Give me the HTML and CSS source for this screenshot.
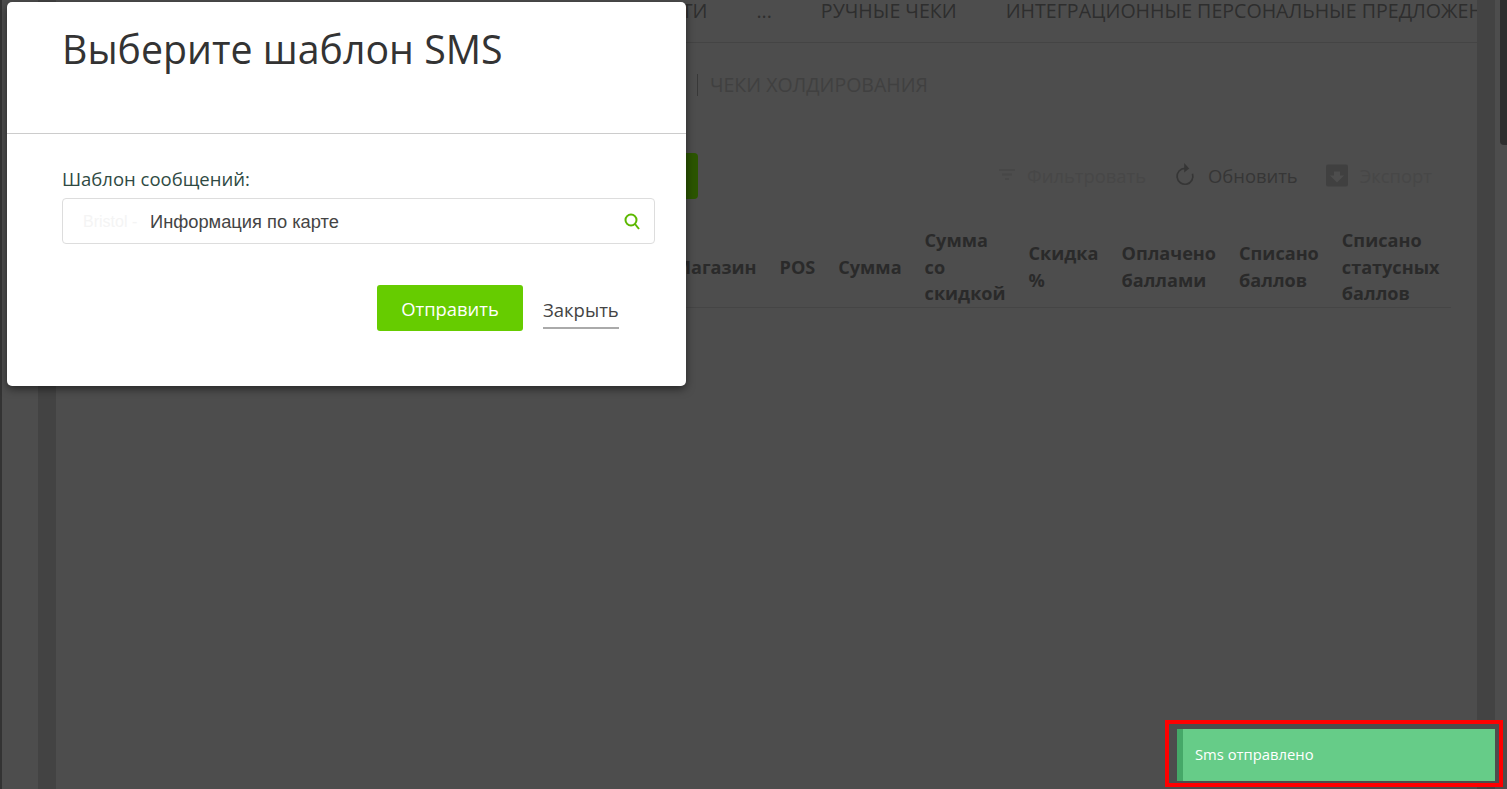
FILE: index.html
```html
<!DOCTYPE html>
<html lang="ru">
<head>
  <meta charset="UTF-8">
  <meta name="viewport" content="width=device-width, initial-scale=1.0">
  <title>Чеки</title>
  <link rel="stylesheet" href="styles.css">
</head>
<body>

  <div class="page">
    <div class="edge"></div>

    <div class="content">
      <div class="tabs">
        <span class="tab">АКТИВНОСТИ</span>
        <span class="tab">...</span>
        <span class="tab">РУЧНЫЕ ЧЕКИ</span>
        <span class="tab">ИНТЕГРАЦИОННЫЕ ПЕРСОНАЛЬНЫЕ ПРЕДЛОЖЕНИЯ</span>
      </div>

      <div class="subtabs">
        <span class="subtab">ЧЕКИ ХОЛДИРОВАНИЯ</span>
      </div>

      <div class="toolbar">
        <div class="add-btn"></div>
        <div class="tool tool-faded">
          <svg class="tool-icon-small" viewBox="0 0 16 12"><path d="M0 1h16M3 5.500h10M6 10h4" /></svg>
          Фильтровать
        </div>
        <div class="tool">
          <svg class="tool-icon" viewBox="0 0 22 30"><path d="M11 6.500a9.500 9.500 0 1 0 9 6.500" /><path class="fill" d="M10 0l6 6.500-6 5z" /></svg>
          Обновить
        </div>
        <div class="tool tool-faded">
          <svg class="tool-icon" viewBox="0 0 22 22"><path class="fill" d="M2 0h18a2 2 0 0 1 2 2v18a2 2 0 0 1-2 2H2a2 2 0 0 1-2-2V2a2 2 0 0 1 2-2z" /><path class="cut" d="M8 7h6v4h4l-7 7-7-7h4z" /></svg>
          Экспорт
        </div>
      </div>

      <table class="checks">
        <thead>
          <tr>
            <th>Магазин</th>
            <th>POS</th>
            <th>Сумма</th>
            <th>Сумма<br>со<br>скидкой</th>
            <th>Скидка<br>%</th>
            <th>Оплачено<br>баллами</th>
            <th>Списано<br>баллов</th>
            <th>Списано<br>статусных<br>баллов</th>
          </tr>
        </thead>
      </table>
    </div>

    <div class="scrollbar"><div class="thumb"></div></div>
  </div>

  <div class="modal">
    <div class="modal-head">
      <h2>Выберите шаблон SMS</h2>
    </div>
    <div class="modal-body">
      <div class="field-label">Шаблон сообщений:</div>
      <div class="select">
        <span class="ghost">Bristol -</span>
        <span class="select-value">Информация по карте</span>
        <svg class="search-icon" viewBox="0 0 16 17"><circle cx="7" cy="7" r="5.500" /><path d="M11 11l4 5" /></svg>
      </div>
      <div class="modal-actions">
        <button class="send-btn">Отправить</button>
        <span class="close-link">Закрыть</span>
      </div>
    </div>
  </div>

  <div class="highlight">
    <div class="toast">Sms отправлено</div>
  </div>

</body>
</html>
```

FILE: styles.css
```css
* {
  box-sizing: border-box;
}

html, body {
  height: 100%;
}

body {
  margin: 0;
  overflow: hidden;
  background-color: #4d4d4d;
  font-family: "Open Sans", Arial, sans-serif;
  color: #2a2a2a;
}

.page {
  display: flex;
  height: 100vh;
}

.edge {
  width: 2px;
  background-color: #333;
}

.content {
  width: 1457px;
  margin-left: 36px;
  border-left: 18px solid #434343;
  border-right: 18px solid #434343;
  overflow: hidden;
}

.scrollbar {
  width: 7px;
  margin-left: 5px;
}

.thumb {
  height: 145px;
  background-color: #2e2e2e;
  border-radius: 0 0 0 4px;
}

.tabs {
  display: flex;
  gap: 49px;
  height: 43px;
  padding-left: 521px;
  border-bottom: 1px solid #444;
  font-size: 19.600px;
  line-height: 21px;
  white-space: nowrap;
  color: #2e2e2e;
  overflow: hidden;
}

.subtabs {
  height: 110px;
  padding: 31px 0 0 641px;
}

.subtab {
  display: inline-block;
  height: 22px;
  padding-left: 12px;
  border-left: 1px solid #383838;
  font-size: 19.500px;
  line-height: 22px;
  color: #404040;
}

.toolbar {
  display: flex;
  align-items: center;
  height: 46px;
  padding-right: 45px;
}

.add-btn {
  width: 140px;
  height: 46px;
  margin-left: 502px;
  margin-right: auto;
  background-color: #2b5500;
  border-radius: 4px;
}

.tool {
  display: flex;
  align-items: center;
  gap: 12px;
  margin-left: 28px;
  padding-bottom: 2px;
  font-size: 18.400px;
  color: #363636;
}

.tool-faded {
  color: #474747;
}

.tool svg {
  fill: none;
  stroke: currentColor;
  stroke-width: 2;
}

.tool svg .fill {
  fill: currentColor;
  stroke: none;
}

.tool svg .cut {
  fill: #4d4d4d;
  stroke: none;
}

.tool-faded svg .fill {
  fill: #404040;
}

.tool-icon-small {
  width: 16px;
  height: 12px;
}

.tool-icon {
  width: 22px;
  height: 25px;
}

.checks {
  margin: 28px 26px 0 auto;
  border-collapse: collapse;
}

.checks th {
  padding: 0 11.500px;
  border-bottom: 1px solid #454545;
  font-size: 18.100px;
  line-height: 26.500px;
  font-weight: 700;
  text-align: left;
  white-space: nowrap;
  color: #2a2a2a;
}

.modal {
  position: absolute;
  left: 7px;
  top: 2px;
  width: 679px;
  height: 384px;
  background-color: #fff;
  border-radius: 5px;
  box-shadow: 0 3px 9px rgba(0, 0, 0, 0.5);
}

.modal-head {
  height: 132px;
  padding: 22px 55px 0;
  border-bottom: 1px solid #ccc;
}

.modal-head h2 {
  margin: 0;
  font-size: 39.300px;
  line-height: 50px;
  font-weight: 400;
  color: #333;
}

.modal-body {
  padding: 33px 31px 0 55px;
}

.field-label {
  font-size: 18.500px;
  line-height: 24px;
  color: #2f4a43;
}

.select {
  display: flex;
  align-items: center;
  height: 46px;
  margin-top: 7px;
  padding: 2px 14px 0 20px;
  border: 1px solid #ddd;
  border-radius: 4px;
}

.ghost {
  width: 67px;
  font-family: "Liberation Sans", Arial, sans-serif;
  font-size: 16px;
  color: #f4f4f4;
}

.select-value {
  font-family: "Liberation Sans", Arial, sans-serif;
  font-size: 18.300px;
  color: #444;
}

.search-icon {
  width: 16px;
  height: 17px;
  margin: -2px 0 0 auto;
  fill: none;
  stroke: #5cb800;
  stroke-width: 2;
}

.modal-actions {
  display: flex;
  align-items: center;
  margin-top: 41px;
  padding-left: 315px;
}

.send-btn {
  width: 146px;
  height: 46px;
  border: none;
  border-radius: 3px;
  background-color: #66cc00;
  font-family: inherit;
  font-size: 18.400px;
  color: #fff;
}

.close-link {
  margin: 9px 0 0 20px;
  padding-bottom: 4px;
  border-bottom: 2px solid #aaa;
  font-size: 18.500px;
  line-height: 26px;
  color: #444;
}

.highlight {
  position: fixed;
  left: 1165px;
  top: 720px;
  width: 338px;
  height: 67px;
  padding: 5px 4px 2px 8px;
  border: 4px solid #f00;
  background-color: #4d4d4d;
}

.toast {
  height: 52px;
  padding-left: 12px;
  border-left: 6px solid #45a868;
  background-color: #66cc88;
  font-size: 14.800px;
  line-height: 50px;
  color: #fff;
}
```
